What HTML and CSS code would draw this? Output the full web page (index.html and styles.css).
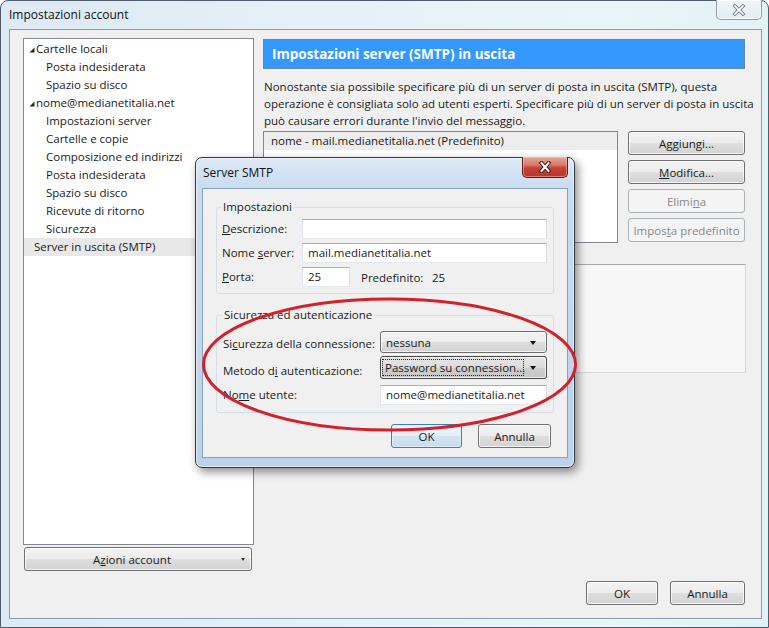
FILE: index.html
```html
<!DOCTYPE html>
<html lang="it">
<head>
<meta charset="utf-8">
<title>Impostazioni account</title>
<link rel="stylesheet" href="styles.css">
</head>
<body>
<div class="win">
  <div class="titlebar">
    <span class="title">Impostazioni account</span>
    <div class="win-close">
      <svg width="14" height="12" viewBox="0 0 14 12"><path d="M3 2 L11 10 M11 2 L3 10" stroke="#7d8894" stroke-width="3.6" stroke-linecap="square" fill="none"/><path d="M3 2 L11 10 M11 2 L3 10" stroke="#ffffff" stroke-width="1.6" stroke-linecap="square" fill="none"/></svg>
    </div>
  </div>
  <div class="client">
    <div class="main">
      <div class="leftcol">
        <div class="tree">
          <div class="node top"><svg class="tw" width="6" height="6" viewBox="0 0 6 6"><polygon points="5.5,0.5 5.5,5.5 0.5,5.5" fill="#262626"/></svg>Cartelle locali</div>
          <div class="node child">Posta indesiderata</div>
          <div class="node child">Spazio su disco</div>
          <div class="node top"><svg class="tw" width="6" height="6" viewBox="0 0 6 6"><polygon points="5.5,0.5 5.5,5.5 0.5,5.5" fill="#262626"/></svg>nome@medianetitalia.net</div>
          <div class="node child">Impostazioni server</div>
          <div class="node child">Cartelle e copie</div>
          <div class="node child">Composizione ed indirizzi</div>
          <div class="node child">Posta indesiderata</div>
          <div class="node child">Spazio su disco</div>
          <div class="node child">Ricevute di ritorno</div>
          <div class="node child">Sicurezza</div>
          <div class="node leaf sel">Server in uscita (SMTP)</div>
        </div>
        <div class="btn btn-actions"><span class="act-label">A<u>z</u>ioni account</span><span class="caret"></span></div>
      </div>
      <div class="rightcol">
        <div class="hdr">Impostazioni server (SMTP) in uscita</div>
        <p class="desc">Nonostante sia possibile specificare più di un server di posta in uscita (SMTP), questa<br>operazione è consigliata solo ad utenti esperti. Specificare più di un server di posta in uscita<br>può causare errori durante l'invio del messaggio.</p>
        <div class="servers">
          <div class="list">
            <div class="row sel">nome - mail.medianetitalia.net (Predefinito)</div>
          </div>
          <div class="btncol">
            <div class="btn">A<u>g</u>giungi...</div>
            <div class="btn"><u>M</u>odifica...</div>
            <div class="btn disabled">Elimi<u>n</u>a</div>
            <div class="btn disabled">Impos<u>t</u>a predefinito</div>
          </div>
        </div>
        <div class="details"></div>
      </div>
    </div>
    <div class="footer">
      <div class="btn b-ok">OK</div>
      <div class="btn b-cancel">Annulla</div>
    </div>
  </div>
</div>

<div class="dialog">
  <div class="dlg-titlebar">
    <span class="dlg-title">Server SMTP</span>
    <div class="dlg-close">
      <svg width="14" height="12" viewBox="0 0 14 12"><path d="M3.5 2 L10.5 10 M10.5 2 L3.5 10" stroke="#4a1410" stroke-width="4" stroke-linecap="square" fill="none"/><path d="M3.5 2 L10.5 10 M10.5 2 L3.5 10" stroke="#ffffff" stroke-width="2" stroke-linecap="square" fill="none"/></svg>
    </div>
  </div>
  <div class="dlg-client">
    <fieldset class="group g1">
      <legend>Impostazioni</legend>
      <div class="grid1">
        <label><u>D</u>escrizione:</label>
        <div class="input"></div>
        <label>Nome <u>s</u>erver:</label>
        <div class="input">mail.medianetitalia.net</div>
        <label><u>P</u>orta:</label>
        <div class="portrow">
          <div class="input port">25</div>
          <span class="deflabel">Predefinito:</span>
          <span>25</span>
        </div>
      </div>
    </fieldset>
    <fieldset class="group g2">
      <legend>Sicurezza ed autenticazione</legend>
      <div class="grid2">
        <label>Si<u>c</u>urezza della connessione:</label>
        <div class="combo"><span class="combo-text">nessuna</span><span class="arrow"></span></div>
        <label>Metodo d<u>i</u> autenticazione:</label>
        <div class="combo focus"><span class="combo-text">Password su connession...</span><span class="arrow"></span></div>
        <label>No<u>m</u>e utente:</label>
        <div class="input">nome@medianetitalia.net</div>
      </div>
    </fieldset>
    <div class="dlg-buttons">
      <div class="btn default d-ok">OK</div>
      <div class="btn d-cancel">Annulla</div>
    </div>
  </div>
</div>

<svg class="mark" width="400" height="150" viewBox="0 0 400 150">
  <ellipse cx="194.5" cy="74.5" rx="186" ry="65.5" fill="none" stroke="#d2202c" stroke-width="3"/>
</svg>
</body>
</html>
```

FILE: styles.css
```css
html, body {
  margin: 0;
  padding: 0;
}
body {
  position: relative;
  width: 769px;
  height: 628px;
  overflow: hidden;
  background: #ffffff;
  font-family: "Open Sans", "Noto Sans", sans-serif;
  font-size: 11.5px;
  color: #1a1a1a;
}
u { text-decoration: underline; text-underline-offset: 1px; }

/* ---------- outer window ---------- */
.win {
  box-sizing: border-box;
  width: 769px;
  height: 628px;
  border: 1px solid #4e5d6c;
  border-radius: 8px 8px 0 0;
  background: linear-gradient(to right, #dde9f3 0%, #e6f1f7 45%, #e9f6f8 80%, #e2f1f4 100%);
  display: flex;
  flex-direction: column;
}
.titlebar {
  height: 28px;
  display: flex;
  justify-content: space-between;
  align-items: flex-start;
  padding-left: 8px;
}
.title {
  font-size: 12px;
  line-height: 28px;
  color: #111;
}
.win-close {
  margin-top: -1px;
  margin-right: 6px;
  width: 46px;
  height: 20px;
  box-sizing: border-box;
  border: 1px solid #8f9ba6;
  border-top: none;
  border-radius: 0 0 5px 5px;
  background: linear-gradient(#eef6f9, #e2eef3);
  box-shadow: inset 0 0 0 1px rgba(255,255,255,0.7);
  display: flex;
  align-items: center;
  justify-content: center;
}
.client {
  box-sizing: border-box;
  margin-left: 8px;
  width: 753px;
  height: 590px;
  border: 1px solid #8c9cad;
  background: #f0f0f0;
  padding: 8px 16px 0 13px;
  display: flex;
  flex-direction: column;
}
.main {
  display: flex;
  gap: 9px;
}
.leftcol {
  width: 231px;
  display: flex;
  flex-direction: column;
  gap: 2px;
}
.tree {
  box-sizing: border-box;
  height: 507px;
  background: #ffffff;
  border: 1px solid #828790;
  padding-top: 1px;
}
.node {
  height: 18px;
  line-height: 18px;
  white-space: nowrap;
  display: flex;
  align-items: center;
}
.node.top { padding-left: 5px; }
.node.top .tw { margin-right: 1px; margin-top: 2px; flex: none; }
.node.child { padding-left: 22px; }
.node.leaf { padding-left: 10px; }
.node.sel { background: #e8e8e8; }

/* ---------- buttons ---------- */
.btn {
  box-sizing: border-box;
  height: 24px;
  border: 1px solid #707070;
  border-radius: 3px;
  background: linear-gradient(#f3f3f3 0%, #ececec 50%, #dedede 51%, #d3d3d3 100%);
  box-shadow: inset 0 0 0 1px rgba(255,255,255,0.75);
  display: flex;
  align-items: center;
  justify-content: center;
  white-space: nowrap;
  color: #1a1a1a;
}
.btn.disabled {
  border-color: #adb2b5;
  background: #f4f4f4;
  box-shadow: none;
  color: #8a8a8a;
}
.btn.default {
  border-color: #3c7fb1;
  background: linear-gradient(#eef5fa 0%, #e3eef6 50%, #d4e5f1 51%, #c8ddee 100%);
  box-shadow: inset 0 0 0 1px rgba(220,240,252,0.9);
}
.btn-actions {
  margin-left: 1px;
  width: 228px;
  justify-content: flex-start;
}
.act-label {
  flex: 1;
  text-align: center;
}
.caret {
  width: 12px;
  height: 100%;
  position: relative;
  flex: none;
}
.caret::after {
  content: "";
  position: absolute;
  left: 2px;
  top: 10px;
  border-left: 2px solid transparent;
  border-right: 2px solid transparent;
  border-top: 3px solid #333;
}

/* ---------- right column ---------- */
.rightcol {
  width: 482px;
  display: flex;
  flex-direction: column;
}
.hdr {
  box-sizing: border-box;
  margin-top: 1px;
  height: 30px;
  border: 1px solid #6c87a3;
  background: #3399ff;
  color: #ffffff;
  font-weight: 700;
  font-size: 13.5px;
  line-height: 28px;
  padding-left: 8px;
  white-space: nowrap;
}
.desc {
  margin: 9px 0 0 1px;
  line-height: 17px;
  white-space: nowrap;
}
.servers {
  margin-top: 2px;
  display: flex;
  gap: 10px;
}
.list {
  box-sizing: border-box;
  width: 355px;
  height: 112px;
  background: #ffffff;
  border: 1px solid #828790;
}
.row {
  height: 18px;
  line-height: 18px;
  padding-left: 7px;
  white-space: nowrap;
}
.row.sel { background: #ededed; }
.btncol {
  width: 117px;
  display: flex;
  flex-direction: column;
  gap: 5px;
}
.btncol .btn { height: 24px; }
.details {
  box-sizing: border-box;
  margin-top: 21px;
  height: 109px;
  width: 483px;
  background: #f7f7f7;
  border: 1px solid #d8d8d8;
  border-top-color: #a9a9a9;
}
.footer {
  margin-top: 10px;
  display: flex;
  justify-content: flex-end;
  gap: 12px;
}
.b-ok { width: 72px; }
.b-cancel { width: 75px; }

/* ---------- dialog ---------- */
.dialog {
  position: absolute;
  left: 195px;
  top: 157px;
  box-sizing: border-box;
  width: 380px;
  height: 311px;
  border: 1px solid #2e3a46;
  border-radius: 7px;
  background: linear-gradient(#dde9f6 0px, #c9dcf1 30px, #bcd2ea 100%);
  box-shadow: 3px 4px 10px rgba(0,0,0,0.45), inset 0 0 0 1px rgba(255,255,255,0.55);
  display: flex;
  flex-direction: column;
}
.dlg-titlebar {
  height: 30px;
  display: flex;
  justify-content: space-between;
  align-items: flex-start;
  padding-left: 7px;
}
.dlg-title {
  font-size: 12px;
  line-height: 30px;
  color: #111;
}
.dlg-close {
  margin-top: -1px;
  margin-right: 6px;
  box-sizing: border-box;
  width: 46px;
  height: 21px;
  border: 1px solid #5b1d17;
  border-top: none;
  border-radius: 0 0 5px 5px;
  background: linear-gradient(#e8a899 0%, #d9786a 40%, #c34234 55%, #b8362a 100%);
  box-shadow: inset 0 0 0 1px rgba(255,200,190,0.5);
  display: flex;
  align-items: center;
  justify-content: center;
}
.dlg-client {
  box-sizing: border-box;
  margin-left: 6px;
  width: 366px;
  height: 270px;
  border: 1px solid #8aa1ba;
  background: #f0f0f0;
  padding: 10px 13px 0 13px;
}
.group {
  margin: 0;
  border: 1px solid #d5dfe5;
  border-radius: 3px;
  min-width: 0;
}
.group legend {
  padding: 0 2px;
  margin-left: -1px;
  line-height: 16px;
}
.g1 { padding: 4px 6px 6px 5px; }
.g2 { margin-top: 13px; padding: 8px 6px 7px 6px; }
.grid1 {
  display: grid;
  grid-template-columns: 80px 1fr;
  row-gap: 4px;
  align-items: center;
}
.grid2 {
  display: grid;
  grid-template-columns: 157px 1fr;
  align-items: center;
}
label { line-height: 20px; white-space: nowrap; }
.input {
  box-sizing: border-box;
  height: 20px;
  background: #ffffff;
  border: 1px solid;
  border-color: #abadb3 #dbdfe6 #e3e9ef #e2e3ea;
  padding-left: 5px;
  line-height: 18px;
  white-space: nowrap;
}
.portrow {
  display: flex;
  align-items: center;
}
.input.port { width: 48px; }
.deflabel { margin-left: 11px; width: 71px; }
.combo {
  box-sizing: border-box;
  height: 22px;
  border: 1px solid #707070;
  border-radius: 3px;
  background: linear-gradient(#f3f3f3 0%, #ececec 50%, #dedede 51%, #d3d3d3 100%);
  box-shadow: inset 0 0 0 1px rgba(255,255,255,0.75);
  display: flex;
  align-items: center;
  padding-left: 5px;
}
.grid2 .combo:first-of-type { }
.grid2 > :nth-child(2) { margin-bottom: 3px; }
.grid2 > :nth-child(4) { margin-bottom: 6px; height: 23px; }
.combo-text { flex: 1; white-space: nowrap; }
.combo.focus {
  border-color: #4a4a4a;
  background: linear-gradient(#e6e6e6 0%, #dcdcdc 50%, #cfcfcf 51%, #c6c6c6 100%);
  padding-left: 2px;
}
.combo.focus .combo-text {
  flex: none;
  width: 138px;
  outline: 1px dotted #222;
  outline-offset: 0;
  padding-left: 2px;
  line-height: 15px;
}
.arrow {
  margin-left: auto;
  margin-right: 10px;
  width: 0;
  height: 0;
  border-left: 3.5px solid transparent;
  border-right: 3.5px solid transparent;
  border-top: 4px solid #111;
  margin-top: 1px;
}
.dlg-buttons {
  margin-top: 11px;
  display: flex;
  justify-content: flex-end;
  gap: 16px;
  padding-right: 3px;
}
.d-ok { width: 71px; height: 24px; }
.d-cancel { width: 73px; height: 24px; }

/* ---------- annotation ---------- */
.mark {
  position: absolute;
  left: 195px;
  top: 290px;
  pointer-events: none;
}
```
